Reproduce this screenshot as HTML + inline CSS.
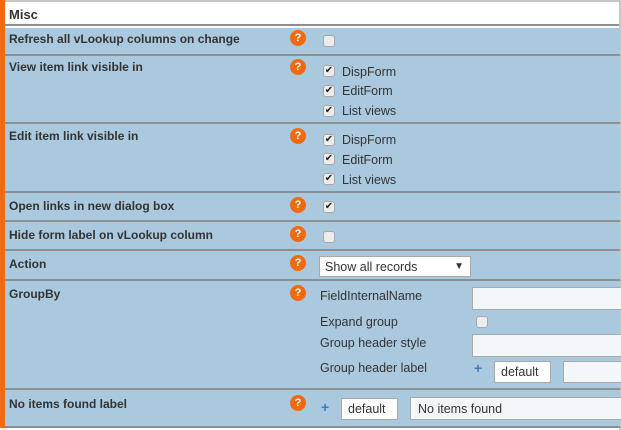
<!DOCTYPE html>
<html><head><style>
*{margin:0;padding:0;box-sizing:border-box}
body{width:621px;height:430px;background:#fff;position:relative;overflow:hidden;font-family:"Liberation Sans",sans-serif;}
.a{position:absolute}
.bar{left:0;top:0;width:5px;height:428px;background:#f26a10}
.row{left:5px;width:615px;background:#abc9de;border-bottom:2px solid #8a8f94}
.lbl{font-size:12px;font-weight:bold;color:#333;left:9px}
.h{width:16px;height:16px;border-radius:50%;background:#f26a10;color:#fff;font-size:11px;font-weight:bold;text-align:center;line-height:16px}
.cb{width:12px;height:12px;border:1px solid #a8a8a8;border-radius:3px;background:#ececec;font-size:10px;line-height:10px;text-align:center;color:#222}
.t{font-size:12.5px;color:#333}
.in{background:#f4f7fa;border:1px solid #a9a9a9;font-size:12.5px;color:#333;padding-left:7px}
.pl{color:#3a7cc0;font-weight:bold;font-size:14px}
</style></head><body>
<div class="a" style="left:0;top:0;width:621px;height:2px;background:#c8c8c8"></div>
<div class="a" style="left:619px;top:0;width:2px;height:430px;background:#c8c8c8"></div>
<div class="a" style="left:5px;top:2px;width:614px;height:24px;background:#fff;border-bottom:2px solid #8a8f94"></div>
<div class="a lbl" style="top:7px;font-size:13px">Misc</div>
<div class="a bar"></div>

<div class="a row" style="top:28px;height:28px"></div>
<div class="a row" style="top:56px;height:68px"></div>
<div class="a row" style="top:124px;height:69px"></div>
<div class="a row" style="top:193px;height:29px"></div>
<div class="a row" style="top:222px;height:29px"></div>
<div class="a row" style="top:251px;height:30px"></div>
<div class="a row" style="top:281px;height:109px"></div>
<div class="a row" style="top:390px;height:38px"></div>

<div class="a lbl" style="top:32px">Refresh all vLookup columns on change</div>
<div class="a lbl" style="top:60px">View item link visible in</div>
<div class="a lbl" style="top:129px">Edit item link visible in</div>
<div class="a lbl" style="top:199px">Open links in new dialog box</div>
<div class="a lbl" style="top:228px">Hide form label on vLookup column</div>
<div class="a lbl" style="top:257px">Action</div>
<div class="a lbl" style="top:287px">GroupBy</div>
<div class="a lbl" style="top:397px">No items found label</div>

<div class="a h" style="left:290px;top:30px">?</div>
<div class="a h" style="left:290px;top:59px">?</div>
<div class="a h" style="left:290px;top:128px">?</div>
<div class="a h" style="left:290px;top:197px">?</div>
<div class="a h" style="left:290px;top:226px">?</div>
<div class="a h" style="left:290px;top:255px">?</div>
<div class="a h" style="left:290px;top:285px">?</div>
<div class="a h" style="left:290px;top:395px">?</div>

<div class="a cb" style="left:323px;top:35px"></div>
<div class="a cb" style="left:323px;top:65px">✔</div><div class="a t" style="left:342px;top:65px">DispForm</div>
<div class="a cb" style="left:323px;top:85px">✔</div><div class="a t" style="left:342px;top:84px">EditForm</div>
<div class="a cb" style="left:323px;top:105px">✔</div><div class="a t" style="left:342px;top:104px">List views</div>
<div class="a cb" style="left:323px;top:134px">✔</div><div class="a t" style="left:342px;top:133px">DispForm</div>
<div class="a cb" style="left:323px;top:153px">✔</div><div class="a t" style="left:342px;top:153px">EditForm</div>
<div class="a cb" style="left:323px;top:173px">✔</div><div class="a t" style="left:342px;top:173px">List views</div>
<div class="a cb" style="left:323px;top:201px">✔</div>
<div class="a cb" style="left:323px;top:231px"></div>

<div class="a in" style="left:319px;top:256px;width:152px;height:21px;background:#fff;padding-left:5px;line-height:20px">Show all records<span style="position:absolute;right:6px;top:0;font-size:10px">▼</span></div>

<div class="a t" style="left:320px;top:289px">FieldInternalName</div>
<div class="a in" style="left:472px;top:287px;width:160px;height:23px"></div>
<div class="a t" style="left:320px;top:315px">Expand group</div>
<div class="a cb" style="left:476px;top:316px"></div>
<div class="a t" style="left:320px;top:336px">Group header style</div>
<div class="a in" style="left:472px;top:334px;width:160px;height:23px"></div>
<div class="a t" style="left:320px;top:361px">Group header label</div>
<div class="a pl" style="left:474px;top:360px">+</div>
<div class="a in" style="left:494px;top:361px;width:57px;height:22px;background:#fff;padding-left:6px;line-height:21px">default</div>
<div class="a in" style="left:563px;top:361px;width:70px;height:22px"></div>

<div class="a pl" style="left:321px;top:399px">+</div>
<div class="a in" style="left:341px;top:398px;width:57px;height:22px;background:#fff;padding-left:6px;line-height:21px">default</div>
<div class="a in" style="left:410px;top:397px;width:220px;height:23px;line-height:23px">No items found</div>
</body></html>
